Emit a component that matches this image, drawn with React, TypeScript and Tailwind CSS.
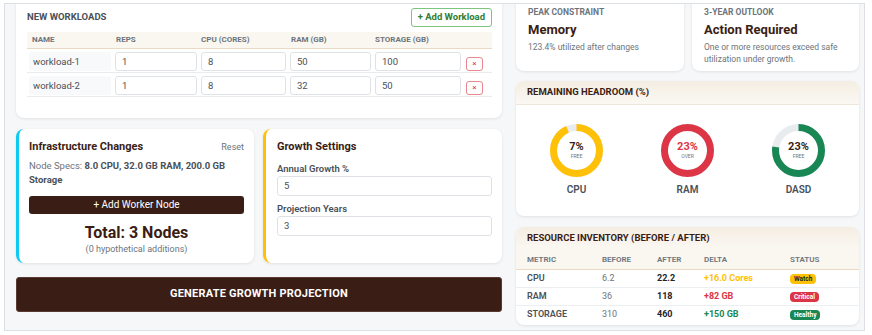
import React from 'react';

type Workload = { name: string, reps: string, cpu: string, ram: string, storage: string };

type DonutProps = { label: string, value: string, sub: string, pct: number, color: string, valueClass: string };

type InvRow = { metric: string, before: string, after: string, delta: string, deltaClass: string, status: string, badgeClass: string };

const workloads: Workload[] = [
  { name: 'workload-1', reps: '1', cpu: '8', ram: '50', storage: '100' },
  { name: 'workload-2', reps: '1', cpu: '8', ram: '32', storage: '50' },
];

const inventory: InvRow[] = [
  { metric: 'CPU', before: '6.2', after: '22.2', delta: '+16.0 Cores', deltaClass: 'text-[#ffc107]', status: 'Watch', badgeClass: 'bg-[#ffc107] text-[#212529]' },
  { metric: 'RAM', before: '36', after: '118', delta: '+82 GB', deltaClass: 'text-[#dc3545]', status: 'Critical', badgeClass: 'bg-[#dc3545] text-white' },
  { metric: 'STORAGE', before: '310', after: '460', delta: '+150 GB', deltaClass: 'text-[#198754]', status: 'Healthy', badgeClass: 'bg-[#198754] text-white' },
];

const cardClass = 'bg-white rounded-[8px] shadow-[0_1px_3px_rgba(0,0,0,0.09)]';
const inputClass = 'h-[19px] w-full rounded-[3px] border border-[#dee2e6] bg-white px-[6px] text-[9.5px] leading-[17px] text-[#495057]';

const Donut = ({ label, value, sub, pct, color, valueClass }: DonutProps) => {
  const r = 23;
  const c = 2 * Math.PI * r;
  return (
    <div className="flex flex-col items-center">
      <div className="relative w-[53px] h-[53px]">
        <svg width="53" height="53" viewBox="0 0 53 53" className="-rotate-90">
          <circle cx="26.5" cy="26.5" r={r} fill="none" stroke="#e9ecef" strokeWidth="7" />
          <circle
            cx="26.5" cy="26.5" r={r} fill="none" stroke={color} strokeWidth="7"
            strokeDasharray={`${c * pct} ${c}`}
          />
        </svg>
        <div className="absolute inset-0 flex flex-col items-center justify-center">
          <span className={`text-[11px] font-bold leading-[12px] ${valueClass}`}>{value}</span>
          <span className="text-[5px] leading-[7px] text-[#6c757d] uppercase">{sub}</span>
        </div>
      </div>
      <span className="mt-[6px] text-[10px] font-semibold leading-[13px] text-[#495057]">{label}</span>
    </div>
  );
};

export default function App() {
  return (
    <div className="w-[872px] h-[335px] bg-white font-['Roboto',_'Open_Sans',_sans-serif]">
      <div className="absolute left-[4px] top-[3px] w-[861px] h-[328px] border border-[#dcdfe3] bg-[#f6f7f9] overflow-hidden">
        <div className="grid grid-cols-[486px_343px] gap-x-[14px] pl-[11px] -mt-[10px]">
          {/* left column */}
          <div className="flex flex-col">
            <div className={`${cardClass} h-[124px] pt-[14px] pl-[11px] pr-[10px]`}>
              <div className="flex items-center justify-between h-[19px]">
                <h2 className="text-[9.5px] font-bold uppercase text-[#495057]">New Workloads</h2>
                <button className="h-[19px] px-[6px] rounded-[3px] border border-[#7cc47f] text-[9.5px] font-bold text-[#2e7d32] bg-white">
                  + Add Workload
                </button>
              </div>
              <div className="mt-[5px]">
                <div className="grid grid-cols-[86px_86px_89px_85px_90px_29px] h-[17px] items-center bg-[#faf6f0] border-b border-[#ead9c4] text-[8px] font-bold uppercase text-[#6c757d]">
                  <span className="pl-[5px]">Name</span>
                  <span className="pl-[3px]">Reps</span>
                  <span className="pl-[2px]">CPU (Cores)</span>
                  <span className="pl-[3px]">RAM (GB)</span>
                  <span className="pl-[2px]">Storage (GB)</span>
                  <span />
                </div>
                {workloads.map((w) => (
                  <div key={w.name} className="grid grid-cols-[86px_86px_89px_85px_90px_29px] h-[24px] items-center border-b border-[#e9ecef]">
                    <div className="mx-[2px] h-[19px] rounded-[3px] bg-[#f8f9fa] px-[4px] text-[9.5px] leading-[19px] text-[#495057]">{w.name}</div>
                    <div className="px-[2px]"><div className={inputClass}>{w.reps}</div></div>
                    <div className="px-[2px]"><div className={inputClass}>{w.cpu}</div></div>
                    <div className="px-[2px]"><div className={inputClass}>{w.ram}</div></div>
                    <div className="px-[2px]"><div className={inputClass}>{w.storage}</div></div>
                    <div className="pl-[3px]">
                      <button className="w-[17px] h-[14px] rounded-[3px] border border-[#ea868f] bg-white text-[8px] leading-[12px] text-[#dc3545]">×</button>
                    </div>
                  </div>
                ))}
              </div>
            </div>

            <div className="mt-[11px] grid grid-cols-[238px_239px] gap-x-[9px] h-[134px]">
              <div className={`${cardClass} border-l-[3px] border-[#0dcaf0] pl-[10px] pr-[10px] pt-[10px]`}>
                <div className="flex items-center justify-between">
                  <h3 className="text-[11px] font-bold text-[#3a1d14]">Infrastructure Changes</h3>
                  <button className="text-[9px] text-[#6c757d]">Reset</button>
                </div>
                <p className="mt-[3px] text-[9.5px] leading-[14px] text-[#6c757d]">
                  Node Specs: <b className="font-bold text-[#495057]">8.0 CPU, 32.0 GB RAM, 200.0 GB</b>
                  <br />
                  <b className="font-bold text-[#495057]">Storage</b>
                </p>
                <button className="mt-[9px] w-full h-[18px] rounded-[3px] bg-[#3a1e16] text-[10px] text-white">+ Add Worker Node</button>
                <div className="mt-[8px] text-center">
                  <div className="text-[16px] font-bold leading-[20px] text-[#3a1d14]">Total: 3 Nodes</div>
                  <div className="text-[9px] leading-[12px] text-[#6c757d]">(0 hypothetical additions)</div>
                </div>
              </div>
              <div className={`${cardClass} border-l-[3px] border-[#ffc107] pl-[11px] pr-[10px] pt-[10px]`}>
                <h3 className="text-[11px] font-bold text-[#3a1d14]">Growth Settings</h3>
                <label className="mt-[6px] block text-[9.5px] font-semibold leading-[13px] text-[#495057]">Annual Growth %</label>
                <div className="mt-[1px] h-[20px] rounded-[3px] border border-[#dee2e6] px-[6px] text-[9.5px] leading-[18px] text-[#495057]">5</div>
                <label className="mt-[6px] block text-[9.5px] font-semibold leading-[13px] text-[#495057]">Projection Years</label>
                <div className="mt-[1px] h-[20px] rounded-[3px] border border-[#dee2e6] px-[6px] text-[9.5px] leading-[18px] text-[#495057]">3</div>
              </div>
            </div>

            <button className="mt-[14px] h-[35px] w-full rounded-[3px] border border-[#5a3a30] bg-[#3a1e16] text-[11px] font-bold uppercase tracking-[0.2px] text-white">
              Generate Growth Projection
            </button>
          </div>

          {/* right column */}
          <div className="flex flex-col">
            <div className="grid grid-cols-[168px_167px] gap-x-[8px] h-[77px]">
              <div className={`${cardClass} pl-[12px] pr-[10px] pt-[12px]`}>
                <div className="text-[8.5px] font-bold uppercase leading-[12px] text-[#6c757d]">Peak Constraint</div>
                <div className="mt-[4px] text-[13px] font-bold leading-[16px] text-[#3a1d14]">Memory</div>
                <div className="mt-[3px] text-[8.5px] leading-[12px] text-[#6c757d]">123.4% utilized after changes</div>
              </div>
              <div className={`${cardClass} pl-[12px] pr-[10px] pt-[12px]`}>
                <div className="text-[8.5px] font-bold uppercase leading-[12px] text-[#6c757d]">3-Year Outlook</div>
                <div className="mt-[4px] text-[13px] font-bold leading-[16px] text-[#3a1d14]">Action Required</div>
                <div className="mt-[3px] text-[8.5px] leading-[12px] text-[#6c757d]">One or more resources exceed safe utilization under growth.</div>
              </div>
            </div>

            <div className={`${cardClass} mt-[10px] h-[135px] overflow-hidden`}>
              <div className="h-[24px] flex items-center px-[11px] bg-gradient-to-b from-[#f4ede2] to-[#fbf8f3] border-b border-[#efe6da]">
                <h3 className="text-[9.5px] font-bold uppercase text-[#3a1d14]">Remaining Headroom (%)</h3>
              </div>
              <div className="grid grid-cols-3 px-[5px] pt-[19px]">
                <Donut label="CPU" value="7%" sub="Free" pct={0.93} color="#ffc107" valueClass="text-[#3a1d14]" />
                <Donut label="RAM" value="23%" sub="Over" pct={1} color="#dc3545" valueClass="text-[#dc3545]" />
                <Donut label="DASD" value="23%" sub="Free" pct={0.77} color="#198754" valueClass="text-[#3a1d14]" />
              </div>
            </div>

            <div className={`${cardClass} mt-[11px] h-[98px] overflow-hidden`}>
              <div className="h-[23px] flex items-center px-[11px] bg-gradient-to-b from-[#f4ede2] to-[#fbf8f3]">
                <h3 className="text-[9.5px] font-bold uppercase text-[#3a1d14]">Resource Inventory (Before / After)</h3>
              </div>
              <div className="grid grid-cols-[75px_55px_47px_86px_1fr] h-[20px] items-center px-[11px] bg-[#faf6f0] border-b border-[#ead9c4] text-[8px] font-semibold uppercase text-[#6c757d]">
                <span>Metric</span>
                <span>Before</span>
                <span>After</span>
                <span>Delta</span>
                <span>Status</span>
              </div>
              {inventory.map((row) => (
                <div key={row.metric} className="grid grid-cols-[75px_55px_47px_86px_1fr] h-[18px] items-center px-[11px] border-b border-[#eceff1] last:border-b-0 text-[9px]">
                  <span className="font-semibold text-[#495057]">{row.metric}</span>
                  <span className="text-[#6c757d]">{row.before}</span>
                  <span className="font-bold text-[#212529]">{row.after}</span>
                  <span className={`font-bold ${row.deltaClass}`}>{row.delta}</span>
                  <span>
                    <span className={`inline-block rounded-[4px] px-[4px] text-[6.5px] font-bold leading-[10px] ${row.badgeClass}`}>{row.status}</span>
                  </span>
                </div>
              ))}
            </div>
          </div>
        </div>
      </div>
    </div>
  );
}
